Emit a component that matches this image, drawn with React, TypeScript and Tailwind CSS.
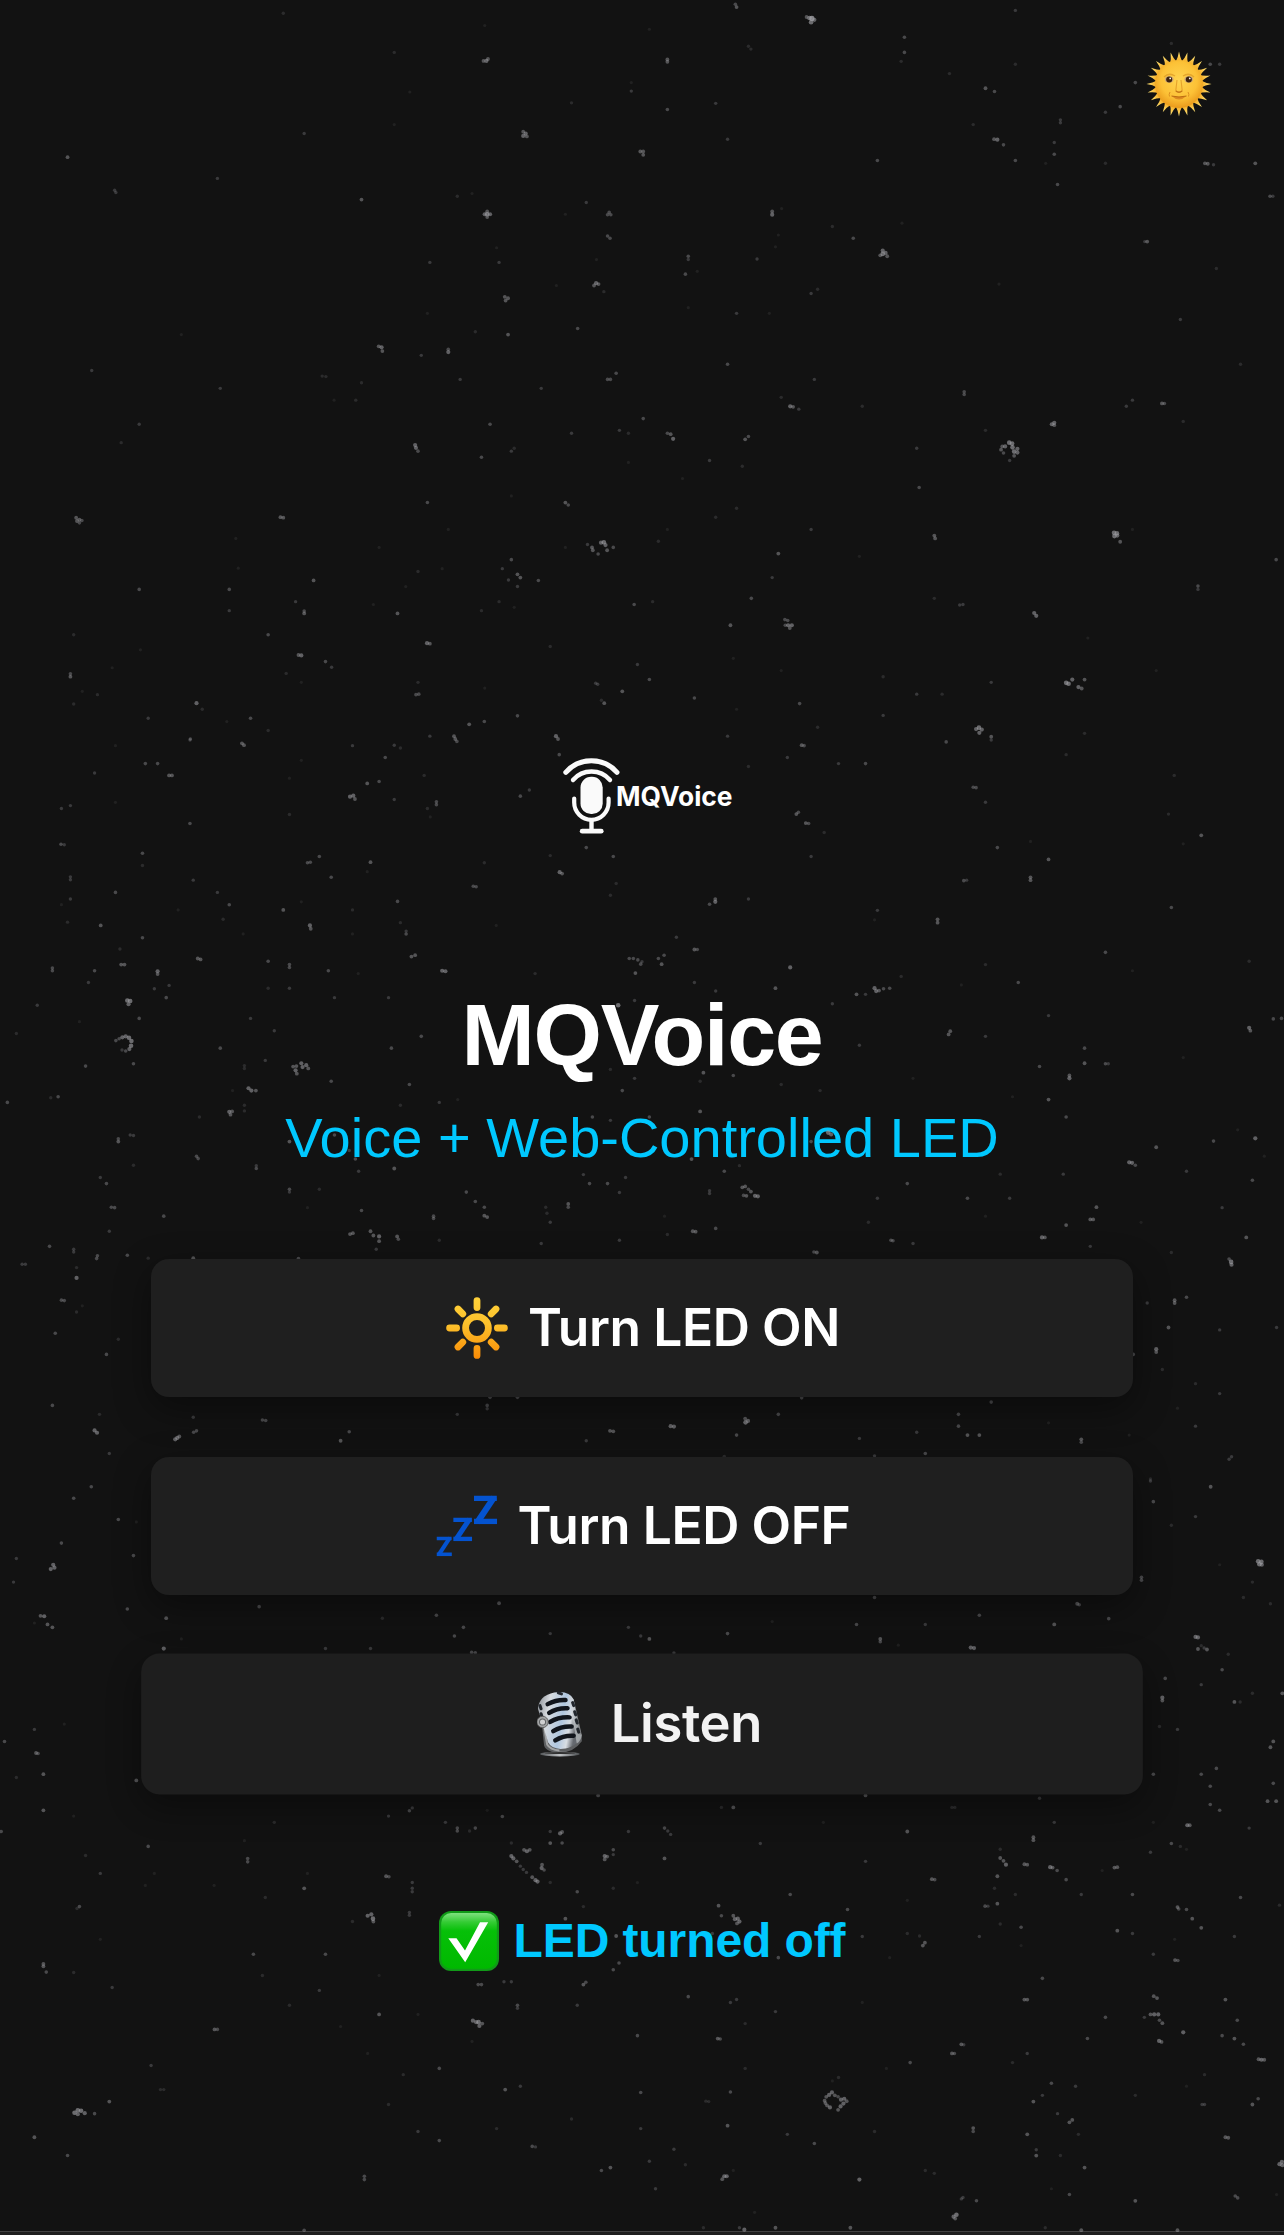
import React from "react";

type Patch = { x: number; y: number; sx: number; sy: number; stars: string };

// Each entry reads "x,y,brightness" in the patch's own units.
const patches: Patch[] = [
  {
    x: 0, y: 0, sx: 0.4094, sy: 0.4719,
    stars:
      "692,28,2 1184,54,1 963,111,2 1181,129,5 1188,129,6 1192,125,5 1542,175,1 1542,193,3 1396,218,2 1001,195,1 963,264,1 743,283,3 165,333,5 280,403,3 283,408,3 531,378,3 883,423,5 1278,279,5 1278,288,6 1284,283,6 1287,289,5 1564,321,5 1117,416,2 1153,410,1 1432,429,3 1381,454,1 1184,454,6 1190,448,5 1190,454,7 1190,460,5 1197,454,6 1488,450,4 1484,455,4 1492,455,4 1484,500,4 1490,505,4 1213,525,1 1219,556,3 1050,556,3 1457,550,1 1451,605,5 1456,600,6 1462,602,5 1475,618,2 1359,605,1 1233,629,5 1235,637,5 1241,632,5 1044,664,1 1411,696,4 1161,703,2 1241,709,5 443,709,1 925,734,5 932,736,6 934,744,5 1029,753,3 1095,740,4 1095,746,6 224,785,3 787,797,2 796,798,2 883,811,2 1124,804,3 1484,804,4 1491,804,4 1505,791,4 538,823,3 816,848,1 869,848,2 1322,823,3 340,899,3 296,938,2 1197,899,4 1396,918,3 1513,912,3 1535,918,2 1014,943,6 1016,949,6 1021,956,4 1256,950,2 1249,956,3 1176,969,4 1535,980,1 1044,1065,4 1249,1051,1 1381,1065,5 1388,1070,4 186,1097,5 188,1104,5 194,1101,5 200,1103,4 194,1108,4 685,1096,5 692,1097,5 1095,1122,1 1435,1154,3 1446,1160,5 1448,1166,5 1468,1150,6 1475,1149,7 1479,1155,6 1483,1166,5 1461,1174,4 1498,1160,4 1381,1160,1 576,1141,1 582,1204,1 926,1160,1 1249,1186,4 1227,1205,3 1080,1205,1 1021,1211,2 1264,1217,5 1271,1224,5 1242,1229,3 1264,1243,3 1315,1230,4 766,1230,5 991,1243,1 340,1249,4 560,1249,4 560,1294,3 722,1275,3 743,1295,4 743,1300,5 971,1300,5 912,1281,1 1219,1275,2 1256,1287,1 1176,1294,2 1549,1281,4 180,1345,2 655,1345,4 1043,1363,6 1050,1364,5 1344,1370,2 343,1377,1 729,1388,5 736,1389,6 795,1402,4 810,1414,3 699,1427,2 1557,1408,3 172,1428,4 172,1434,5 274,1415,1 736,1446,1 1021,1446,2 1016,1472,4 1023,1471,4 238,1472,2 201,1465,1 180,1492,2 1184,1458,1 1455,1448,3 1460,1450,3 1520,1465,5 1476,1490,5 1469,1484,2 480,1490,6 494,1503,2 362,1522,3 612,1522,4 554,1529,1 1264,1517,4 1183,1529,4 1146,1535,5 655,1548,2 1050,1560,3 1109,1560,5 1112,1566,5 1358,1560,6 1363,1566,5 465,1566,4",
  },
  {
    x: 642, y: 0, sx: 0.4094, sy: 0.4719,
    stars:
      "228,9,4 231,15,5 402,36,5 409,38,7 415,39,8 413,47,7 421,42,6 18,62,1 912,22,3 260,98,2 266,104,2 641,79,4 641,111,4 633,130,2 62,126,5 62,131,5 751,156,2 839,187,5 861,194,4 912,136,2 180,219,3 62,232,4 209,295,3 1293,92,2 1388,136,4 1411,136,3 1205,175,4 1168,226,4 1132,238,3 1022,254,3 1022,260,3 809,264,2 860,295,5 868,296,6 883,307,4 912,340,4 1007,302,3 1007,327,4 986,346,1 1132,346,2 3,321,5 3,328,5 575,340,4 1375,346,5 1382,347,5 1396,349,3 1498,346,5 1015,391,4 1534,416,4 1541,416,3 318,448,5 318,455,6 341,442,1 465,480,2 516,505,4 333,498,1 326,523,1 635,473,1 582,541,5 588,531,6 588,538,7 595,536,6 599,543,5 113,543,4 113,550,3 106,581,4 135,575,1 281,549,3 1228,512,3 1234,512,5 1403,569,2 413,622,3 429,613,2 872,602,1 113,652,1 231,664,3 311,664,1 1315,677,3 209,772,4 1462,772,2 421,804,3 340,842,2 362,861,6 369,862,5 383,867,3 538,861,2 787,830,4 787,836,4 1198,848,3 1183,861,3 1270,855,5 1276,855,4 3,887,4 62,918,4 70,920,5 76,930,6 260,925,4 252,931,5 1322,893,2 839,912,2 1001,899,6 1007,896,6 1007,901,5 877,953,5 880,946,5 887,946,6 897,938,7 904,940,7 905,948,7 909,957,7 917,951,6 917,959,6 909,966,5 898,976,3 883,960,4 165,976,3 671,950,3 245,988,2 99,1014,1 231,1077,2 180,1096,2 677,1033,4 62,1122,1 413,1122,3 40,1147,2 714,1135,5 716,1141,5 1153,1129,7 1160,1130,7 1154,1136,7 1161,1135,6 1168,1148,5 1198,1122,1 333,1173,5 531,1179,1 318,1224,3 1549,1186,4 267,1268,4 26,1275,2 714,1268,2 776,1282,3 784,1281,3 1358,1242,4 1358,1249,3 216,1325,5 349,1313,4 356,1315,4 350,1325,4 357,1325,6 366,1325,6 361,1331,5 958,1299,6 963,1305,6 1089,1352,1 223,1395,1 340,1421,1 18,1440,4 589,1434,2 671,1471,3 733,1471,2 853,1446,3 128,1479,4 231,1503,1 385,1491,4 429,1541,2 1036,1447,7 1042,1449,7 1051,1440,6 1066,1456,6 1074,1459,5 1081,1440,5 816,1545,6 823,1542,7 830,1546,6 824,1553,6 853,1561,5 589,1516,3 209,1560,3 1081,1554,2 1256,1421,1",
  },
  {
    x: 0, y: 740, sx: 0.4094, sy: 0.4719,
    stars:
      "591,7,5 596,11,5 464,0,3 861,12,3 963,11,3 978,17,2 941,37,4 1116,3,4 355,50,4 385,50,4 231,70,3 282,12,1 413,75,5 420,75,5 736,43,1 707,81,1 1036,75,2 897,92,5 926,88,4 855,120,6 863,118,6 867,125,5 963,126,3 1066,131,4 1066,137,4 1044,145,2 1051,163,1 150,145,3 172,139,3 282,132,1 707,158,2 464,177,4 149,221,4 157,222,3 348,240,4 348,266,2 1293,106,3 1271,119,4 1366,31,4 751,260,4 758,259,4 780,247,4 905,259,5 897,279,1 809,291,4 1183,260,2 1344,245,2 1432,228,4 1498,247,4 1367,280,6 1373,283,5 1156,310,4 1163,311,4 172,290,3 172,296,3 472,297,3 282,323,4 172,337,3 150,349,1 531,323,3 560,349,4 736,343,1 692,360,5 861,360,2 435,360,1 545,380,2 165,386,2 246,393,5 757,393,6 759,400,5 971,342,4 978,387,2 992,405,3 992,411,4 348,419,4 861,411,1 594,411,1 1212,393,1 1491,329,2 1505,304,2 128,483,4 128,489,4 231,489,4 216,514,3 296,476,5 304,476,5 293,443,2 483,463,5 490,465,5 385,490,6 385,496,5 377,527,3 413,520,3 406,546,4 655,469,4 707,476,4 707,482,4 655,526,2 707,526,3 802,489,4 875,495,1 817,546,3 949,546,3 1005,459,5 1014,456,5 1080,489,6 1088,490,6 1307,495,2 1537,463,4 1547,463,4 1558,466,4 1565,475,4 1552,494,5 91,562,3 311,552,7 318,553,7 314,560,6 340,590,4 40,622,2 194,597,1 612,590,3 670,616,3 283,637,4 291,633,4 299,630,6 307,628,6 315,631,7 321,638,7 320,648,7 316,655,6 307,659,4 298,657,3 326,686,4 209,691,4 538,653,4 648,679,3 597,690,2 597,696,2 1029,628,4 956,653,4 809,723,4 1000,730,4 716,692,5 724,691,5 722,700,6 725,707,5 736,685,6 739,693,6 748,689,6 753,696,5 607,738,6 614,743,6 625,743,5 568,743,1 18,768,4 142,756,4 124,758,2 560,788,6 567,787,5 563,794,5 487,799,2 597,774,2 597,786,2 978,774,2 1073,768,3 1118,762,1 289,845,4 289,851,5 318,837,3 326,838,3 480,882,4 484,887,4 626,902,3 626,908,4 326,901,2 707,851,5 817,837,4 853,870,3 868,888,4 963,908,5 876,914,3 245,927,3 260,940,4 272,990,4 280,991,4 400,1009,4 267,1041,3 121,1073,4 707,952,4 707,958,3 780,952,2 751,991,1 883,997,4 855,1047,5 862,1045,5 905,1041,5 912,1050,5 926,1052,6 926,1062,5 919,1079,3 970,1052,5 973,1058,4 1139,958,4 1161,978,4 1183,990,4 1183,1008,5 1190,1011,5 1059,1009,4 1059,1014,4 1073,1060,2 1336,1003,2 1344,1022,3 1333,990,2 1388,983,5 1388,990,4 1425,921,3 1440,940,4 1484,940,4 1528,927,3 1513,959,3 1513,1060,3 1322,1067,3 1447,799,4 1491,806,3 1520,743,4 1550,717,3 1491,698,2 1550,552,3 1510,562,7 180,1079,3 180,1085,3 238,1093,4 236,1099,4 311,1092,4 54,1111,3 62,1111,3 187,1118,2 187,1140,6 150,1187,4 157,1188,4 201,1199,1 187,1212,2 135,1257,4 289,1270,2 260,1302,4 128,1410,4 243,1429,2 362,1098,2 472,1098,5 729,1099,4 231,1463,6 237,1468,6 267,1512,3 472,1435,3 428,1482,6 433,1479,6 438,1476,5 473,1467,4 480,1464,4 641,1441,4 649,1442,4 832,1485,5 853,1466,4 1117,1429,3 1190,1410,4 1190,1417,3 1197,1393,4 1264,1393,4 1490,1464,5 1498,1465,5 1432,1485,3",
  },
  {
    x: 642, y: 740, sx: 0.4094, sy: 0.4719,
    stars:
      "390,11,5 396,12,4 743,4,4 853,0,3 355,37,3 260,56,2 480,50,3 546,50,4 1036,31,2 1300,75,2 1286,157,2 809,100,4 816,101,4 839,132,3 377,157,5 382,153,4 400,176,5 407,177,4 445,196,2 413,247,3 868,228,4 949,215,1 993,253,5 1366,202,5 1322,220,1 786,298,4 793,297,3 949,291,5 949,297,5 179,337,5 179,343,6 165,348,4 260,337,3 575,361,3 568,381,1 722,380,5 722,387,5 1293,355,4 1132,450,4 1483,469,2 84,418,3 128,444,5 135,444,4 40,463,4 54,456,4 48,475,5 0,470,3 362,482,6 128,514,3 180,532,3 326,526,5 524,539,5 546,539,3 568,526,6 572,532,6 579,531,5 590,527,4 605,526,4 633,501,2 465,559,3 839,476,2 780,519,1 919,514,4 1198,489,1 993,584,3 753,617,5 749,624,5 839,628,3 531,647,3 1081,653,4 1081,685,5 1132,686,4 1139,686,3 971,692,4 1322,673,1 1483,610,6 1486,616,5 1542,591,4 1562,590,4 1044,711,5 1044,717,6 993,762,5 905,756,1 1036,799,4 662,717,1 340,730,2 435,743,2 150,705,5 223,711,4 142,723,2 142,787,5 18,799,4 455,832,7 462,836,6 413,851,4 121,888,5 201,914,4 238,902,2 648,940,4 1256,863,5 1396,850,4 1498,844,6 1455,826,1 1190,895,6 1197,896,6 1205,901,4 1520,882,1 1330,914,3 1491,933,4 1029,920,3 875,920,2 245,948,5 252,946,5 248,965,4 255,966,5 260,952,4 266,957,5 276,966,6 283,967,6 165,955,3 165,961,3 575,971,3 795,971,4 898,971,3 1110,990,5 1417,991,3 1095,1016,5 1102,1016,5 1036,1028,5 839,1009,1 553,1022,2 55,1009,1 62,1048,2 124,1041,5 131,1042,5 180,1035,4 608,1060,4 613,1061,4 662,1067,3 977,1054,6 984,1054,5 1095,1073,3 1219,1022,1 1476,1054,5 1293,1086,2 420,1085,4 427,1086,5 1434,1100,4 1439,1106,7 1440,1112,6 1234,1193,3 1301,1187,5 1301,1193,5 1330,1181,4 1286,1245,5 1411,1250,3 1550,1245,3 1256,1291,6 1256,1297,5 1271,1334,2 1352,1364,2 1411,1385,3 1352,1454,3 1308,1416,1 1200,1302,4 390,1394,4 853,1403,4 773,1429,4 773,1454,4 795,1473,5 824,1473,5 671,1467,3 531,1480,3 692,1512,4 568,1517,3 333,1429,4 252,1438,5 253,1446,7 259,1443,6 231,1473,4 70,1454,6 78,1455,6 201,1518,2 993,1447,1 1073,1482,5 1073,1488,4 1190,1473,1 1434,1524,3 1440,1519,3 1242,1566,2",
  },
  {
    x: 0, y: 1480, sx: 0.4094, sy: 0.4815,
    stars:
      "223,14,4 180,38,4 289,82,4 150,131,4 40,163,3 33,212,3 326,157,4 333,87,1 130,176,6 124,185,6 133,182,6 99,282,5 108,283,6 116,300,5 128,306,5 84,297,1 311,268,4 406,287,5 443,330,1 400,350,6 633,263,4 934,287,2 1066,281,4 1132,306,4 1110,324,4 1219,256,5 1344,319,3 795,350,3 905,350,3 1152,358,4 1161,359,4 1535,306,3 1565,324,3 84,518,3 11,543,4 88,567,5 93,568,4 40,618,2 106,611,5 157,507,1 333,624,5 106,686,5 3,730,4 180,698,1 209,780,2 245,817,3 362,761,4 377,817,1 355,842,1 670,711,2 949,698,3 1000,687,4 1007,681,3 1088,711,3 1117,723,4 1117,729,4 1147,729,2 1161,723,4 1190,686,1 1227,699,4 1461,655,5 605,786,4 605,793,4 597,749,1 743,848,5 751,817,1 648,867,2 523,842,1 943,823,5 950,824,4 1007,836,3 1007,848,3 1007,855,3 1249,754,2 1344,730,3 1344,754,5 1373,754,4 1368,734,6 1373,731,5 1280,768,5 1287,771,6 1294,768,5 1249,781,6 1254,786,6 1262,792,5 1271,802,3 1278,809,3 1286,815,3 1300,825,5 1308,831,6 1313,834,6 1324,799,5 1323,806,6 1329,810,4 1344,836,2 1477,781,6 1477,788,5 1483,782,5 1498,768,4 1498,778,3 1535,730,3 1410,855,4 1498,848,2 1557,836,1 1425,886,2 194,886,4 188,890,2 898,905,6 907,902,6 911,911,7 912,917,5 861,917,2 1000,898,3 1000,904,3 1381,911,5 106,1005,5 106,1010,5 113,1022,4 180,1023,2 274,1054,3 245,954,1 619,985,4 795,985,4 641,1029,2 780,1060,3 926,1029,1 707,1091,2 926,1110,5 1021,1110,1 832,1135,1 524,1141,5 531,1141,4 1168,1048,4 1176,1048,4 1231,1042,3 1249,1042,3 1425,1048,5 1431,1043,4 1498,1017,4 1512,1003,4 1505,947,5 1264,1091,4 1264,1097,3 1410,1091,3 1155,1123,6 1163,1126,6 1169,1126,7 1171,1134,6 1178,1129,5 1153,1166,1 1557,1154,4 898,1191,1 985,1235,2 1073,1222,4 1234,1266,5 1271,1259,3 1565,1272,4 369,1216,3 392,1266,2 400,1266,2 949,1297,2 1396,1327,2 1213,1347,2 1021,1353,3 1073,1372,4 1300,1384,4 1308,1385,3 1565,1347,3 182,1314,7 190,1309,7 198,1310,7 207,1315,6 190,1317,6 231,1316,4 267,1291,5 84,1365,5 165,1403,4 890,1446,4 890,1453,4 1469,1434,4 1491,1428,5 743,1558,4",
  },
  {
    x: 642, y: 1480, sx: 0.4094, sy: 0.4815,
    stars:
      "1242,2,3 1389,14,5 1249,45,4 1352,76,3 1293,94,2 1505,169,7 1513,170,7 1508,175,7 1514,176,6 1411,176,1 1220,202,4 1220,208,4 1491,212,2 1469,244,2 1535,257,2 1063,257,5 1068,259,4 1140,288,4 1007,300,5 824,281,4 568,244,4 524,300,4 692,300,3 582,330,5 582,336,4 626,343,1 803,348,6 811,349,6 209,319,4 18,330,5 318,294,1 78,359,3 1352,326,6 1358,327,6 1358,351,5 1366,344,2 1373,349,3 1380,352,5 1432,362,2 1417,394,4 1278,412,4 1366,425,3 1491,443,2 1271,452,6 1271,458,5 1447,461,5 1461,461,2 1564,443,5 1264,512,2 1308,518,3 1542,543,5 1535,555,5 1403,599,4 1366,611,4 1249,611,4 1388,636,4 1388,674,4 1411,686,4 1542,630,4 1528,667,5 1549,667,5 1332,717,6 1338,717,5 1483,723,3 1249,711,1 1293,755,4 1315,761,2 1330,767,1 1242,773,3 194,680,2 223,680,5 546,655,5 757,680,2 764,680,2 971,661,3 1007,711,3 55,723,4 63,729,3 70,736,3 443,711,1 289,755,3 648,730,5 55,786,5 546,792,3 956,742,5 956,748,5 875,767,2 875,785,5 883,791,5 889,799,6 934,798,5 941,799,5 997,804,6 1003,805,5 1014,811,4 1124,811,1 1154,805,5 1161,804,5 1036,830,4 868,823,5 861,848,2 868,880,5 912,861,2 1073,861,3 1198,861,4 838,885,4 845,885,3 708,829,5 715,830,4 648,873,1 362,861,4 187,884,5 194,905,4 223,905,5 227,912,6 234,911,6 238,917,6 232,921,5 502,892,4 1462,867,4 1557,883,2 1308,887,5 1311,891,4 1330,892,4 1344,911,5 1366,930,5 1447,948,3 1301,954,1 1161,936,5 1198,942,3 875,922,2 926,929,4 926,967,1 824,948,3 538,948,3 648,942,2 678,947,2 691,961,5 686,967,5 172,942,3 333,992,4 605,992,1 1249,985,3 1302,997,5 1309,998,4 978,1035,4 934,1079,5 941,1079,5 113,1073,4 216,1085,3 231,1079,3 538,1085,1 326,1104,3 252,1129,2 185,1160,5 191,1161,4 1425,1079,5 1250,1072,5 1258,1076,5 1242,1110,5 1251,1110,6 1261,1110,6 1227,1116,3 1264,1122,4 1271,1128,5 1132,1116,4 1088,1160,4 1263,1165,6 1269,1167,5 1322,1147,6 1454,1122,4 1417,1154,4 1447,1160,5 1469,1172,4 1506,1203,5 1513,1204,6 1520,1204,5 780,1172,5 786,1173,3 757,1191,5 763,1191,4 941,1191,3 905,1210,2 655,1210,4 597,1222,1 252,1222,2 216,1271,4 156,1290,2 163,1291,2 480,1241,2 465,1248,1 446,1289,5 450,1281,5 457,1277,6 464,1272,6 471,1278,5 479,1281,4 486,1287,6 494,1285,6 500,1290,5 492,1295,6 485,1301,6 479,1308,5 459,1303,6 452,1299,5 448,1294,5 1000,1253,4 1059,1259,3 978,1278,3 956,1291,5 1015,1316,3 1044,1334,5 1051,1329,5 1066,1359,2 1205,1278,2 1330,1259,1 1374,1235,2 1368,1297,3 1374,1297,3 1505,1285,4 1491,1297,5 1425,1365,5 1432,1366,5 809,1346,5 809,1353,4 568,1353,2 941,1359,5 963,1391,3 963,1403,5 1022,1403,2 1081,1428,5 209,1341,5 355,1359,3 421,1378,4 78,1390,3 18,1415,3 106,1422,2 33,1472,3 201,1446,6 207,1446,6 196,1452,5 223,1434,1 531,1453,6 692,1434,2 714,1440,2 1000,1472,1 1044,1484,4 780,1493,3 784,1490,3 817,1497,4 1205,1497,5 1449,1487,4 1455,1491,4 1550,1484,1 1557,1421,6 1563,1416,6 1564,1423,6 768,1526,7 761,1530,6 765,1534,5 275,1521,1 150,1553,2 238,1553,3 250,1557,6 326,1553,5 509,1553,5 985,1553,2 1073,1558,5 1308,1558,5",
  },
];

const tones = [0, 0.1, 0.18, 0.28, 0.38, 0.46, 0.54, 0.62, 0.8];
const radii = [0, 1.6, 1.7, 1.7, 1.8, 1.9, 2.1, 2.3, 2.6];

function Starfield() {
  return (
    <svg className="pointer-events-none absolute inset-0 h-full w-full blur-[0.5px]" viewBox="0 0 1284 2235" aria-hidden="true">
      {patches.map((p, i) => (
        <g key={i}>
          {p.stars.split(" ").map((s, j) => {
            const [x, y, b] = s.split(",").map(Number);
            return (
              <circle
                key={j}
                cx={p.x + x * p.sx}
                cy={p.y + y * p.sy}
                r={radii[b]}
                fill="#a3a3a8"
                fillOpacity={tones[b]}
              />
            );
          })}
        </g>
      ))}
    </svg>
  );
}

function SunFace() {
  const rays = Array.from({ length: 24 }, (_, i) => i * 15);
  return (
    <svg className="h-[66px] w-[66px]" viewBox="-33 -33 66 66" aria-label="Light mode">
      <defs>
        <radialGradient id="face" cx="0.5" cy="0.42" r="0.58">
          <stop offset="0" stopColor="#ffd450" />
          <stop offset="0.65" stopColor="#fcc136" />
          <stop offset="1" stopColor="#ea9a1c" />
        </radialGradient>
        <linearGradient id="ray" x1="0" y1="-32" x2="0" y2="-22" gradientUnits="userSpaceOnUse">
          <stop offset="0" stopColor="#ffe477" />
          <stop offset="1" stopColor="#f4a91f" />
        </linearGradient>
      </defs>
      {rays.map((a) => (
        <path key={a} d="M-3.4 -22 Q-1 -26 0 -32.5 Q1.2 -26 3.4 -22Z" fill="url(#ray)" transform={`rotate(${a})`} />
      ))}
      <circle r="24" fill="url(#face)" />
      <path d="M-15 -7 Q-10 -12 -4 -8 M4 -8 Q10 -12 15 -7" fill="none" stroke="#dd9a25" strokeWidth="1.3" opacity="0.75" />
      <ellipse cx="-9.8" cy="-4.6" rx="4.3" ry="3.1" fill="#c9a57a" />
      <ellipse cx="9.8" cy="-4.6" rx="4.3" ry="3.1" fill="#c9a57a" />
      <circle cx="-9.8" cy="-4.6" r="3" fill="#3c2210" />
      <circle cx="9.8" cy="-4.6" r="3" fill="#3c2210" />
      <circle cx="-8.8" cy="-5.6" r="0.9" fill="#fff" />
      <circle cx="10.8" cy="-5.6" r="0.9" fill="#fff" />
      <path d="M-2 -4 L-3.2 6.5 Q0 10 3.2 6.5 L2 -4" fill="none" stroke="#dc9020" strokeWidth="1.1" opacity="0.7" />
      <path d="M-3.2 7 Q0 9.5 3.2 7" fill="none" stroke="#c47716" strokeWidth="1.3" />
      <path d="M-7.5 12 Q0 13.6 7.5 12 Q0 19 -7.5 12Z" fill="#dc8a22" />
      <path d="M-7.5 12 Q0 14 7.5 12" fill="none" stroke="#b5660f" strokeWidth="0.9" />
      <path d="M-9 8 Q-10.5 10.5 -9.5 12.5 M9 8 Q10.5 10.5 9.5 12.5" fill="none" stroke="#dc9020" strokeWidth="1" />
    </svg>
  );
}

function Logo() {
  return (
    <svg className="h-[80px] w-[180px]" viewBox="0 0 180 80" aria-label="MQVoice">
      <g fill="none" stroke="#fafafa" strokeLinecap="round">
        <path d="M4.8 17.3 A34 34 0 0 1 56 17.3" strokeWidth="5" />
        <path d="M12 25 A24.5 24.5 0 0 1 49 25" strokeWidth="4.4" />
        <path d="M13.2 43.5 V47.6 A17.2 17.2 0 0 0 47.6 47.6 V43.5" strokeWidth="4.2" />
        <path d="M30.5 65 V75" strokeWidth="4.4" strokeLinecap="butt" />
        <path d="M21.2 76.2 H40.2" strokeWidth="4.8" />
      </g>
      <rect x="19.5" y="21.8" width="22.2" height="37.2" rx="10.6" fill="#fafafa" />
      <text x="55" y="51.4" fill="#fff" fontFamily="Inter, sans-serif" fontWeight="700" fontSize="27" textLength="116.5" lengthAdjust="spacingAndGlyphs">
        MQVoice
      </text>
    </svg>
  );
}

function BrightIcon() {
  return (
    <svg className="h-[62px] w-[62px] shrink-0" viewBox="-31 -31 62 62" aria-hidden="true">
      <defs>
        <linearGradient id="bright" x1="0" y1="-31" x2="0" y2="31" gradientUnits="userSpaceOnUse">
          <stop offset="0" stopColor="#ffd23a" />
          <stop offset="0.45" stopColor="#fcc02b" />
          <stop offset="1" stopColor="#f98a05" />
        </linearGradient>
      </defs>
      <circle r="11.4" fill="none" stroke="url(#bright)" strokeWidth="6.8" />
      <path
        d="M-3.4 -27.4a3.4 3.4 0 0 1 6.8 0v7a3.4 3.4 0 0 1-6.8 0zM-3.4 20.4a3.4 3.4 0 0 1 6.8 0v7a3.4 3.4 0 0 1-6.8 0zM-27.4 -3.4h7a3.4 3.4 0 0 1 0 6.8h-7a3.4 3.4 0 0 1 0-6.8zM20.4 -3.4h7a3.4 3.4 0 0 1 0 6.8h-7a3.4 3.4 0 0 1 0-6.8z"
        fill="url(#bright)"
      />
      <path
        d="M-19 -19L-14.2 -14.2M19 -19L14.2 -14.2M-19 19L-14.2 14.2M19 19L14.2 14.2"
        fill="none"
        stroke="url(#bright)"
        strokeWidth="6.8"
        strokeLinecap="round"
      />
    </svg>
  );
}

function Zed({ x, y, width, height }: { x: number; y: number; width: number; height: number }) {
  return (
    <svg x={x} y={y} width={width} height={height} viewBox="0 0 23 29" preserveAspectRatio="none" overflow="hidden">
      <path d="M0 2.7H22.6M0 26.3H23" stroke="#0453d0" strokeWidth="5.4" />
      <path d="M20 1.5L3 27.5" stroke="#0453d0" strokeWidth="6.2" />
    </svg>
  );
}

function SleepIcon() {
  return (
    <svg className="h-[62px] w-[62px] shrink-0" viewBox="0 0 62 62" aria-hidden="true">
      <Zed x={38} y={0.6} width={23.2} height={28.6} />
      <Zed x={17.2} y={22.6} width={19} height={23.6} />
      <Zed x={0.5} y={41.6} width={15.4} height={19.6} />
    </svg>
  );
}

function StudioMic() {
  return (
    <svg className="ml-[15px] h-[65px] w-[46px] shrink-0" viewBox="0 0 46 65" aria-hidden="true">
      <defs>
        <linearGradient id="chrome" x1="0" y1="0" x2="1" y2="0.25">
          <stop offset="0" stopColor="#8d9299" />
          <stop offset="0.3" stopColor="#e3e7ec" />
          <stop offset="0.65" stopColor="#b8d0ea" />
          <stop offset="0.85" stopColor="#e4e9ef" />
          <stop offset="1" stopColor="#6a6e74" />
        </linearGradient>
        <linearGradient id="stand" x1="0" y1="0" x2="1" y2="0">
          <stop offset="0" stopColor="#55585b" />
          <stop offset="0.5" stopColor="#c9cccf" />
          <stop offset="1" stopColor="#4c4f52" />
        </linearGradient>
      </defs>
      <path d="M5 34 L7 53 Q9 60 23 60 Q36 60 44 49 L44 42 L36 44 L10 46Z" fill="#626466" />
      <path d="M7 35 L10 52 Q13 57 22 58" fill="none" stroke="#a9abac" strokeWidth="2" />
      <path d="M1 17 Q2 4 17 1 Q32 -1 36 8 L42 43 Q41 53 28 56 Q15 58 11 50 L6 34Z" fill="url(#chrome)" />
      <path d="M31 4 Q36 6 37 12 L44 43 Q43 49 39 51 L34 20Z" fill="#d4d8dc" opacity="0.6" />
      <path
        d="M10.5 12.5 Q19 8 28 8.5M12 21 Q20 16 30 16.5M13 30 Q21 25 32 25.5M16 39 Q24 34 34 34.5M18 48 Q26 43 36 43.5"
        fill="none"
        stroke="#11161d"
        strokeWidth="4.4"
        strokeLinecap="round"
      />
      <path d="M3 14l1 3M4 22l1 3M35 11l1 3M37 20l1 3M38.5 28l1 3M40 37l1 3M21 1.5l3 1" stroke="#23282e" strokeWidth="3" strokeLinecap="round" />
      <circle cx="5.5" cy="30" r="5.6" fill="#a9abac" stroke="#555" strokeWidth="0.8" />
      <circle cx="5.5" cy="30" r="3" fill="#d9dadb" stroke="#66686a" strokeWidth="1" />
      <ellipse cx="22.5" cy="61.5" rx="19.5" ry="2.4" fill="url(#stand)" />
      <ellipse cx="22.5" cy="60.4" rx="15" ry="1" fill="#333" />
    </svg>
  );
}

function CheckIcon() {
  return (
    <svg className="h-[60px] w-[60px] shrink-0" viewBox="0 0 60 60" aria-hidden="true">
      <defs>
        <linearGradient id="green" x1="0" y1="0" x2="0" y2="1">
          <stop offset="0" stopColor="#7fe07f" />
          <stop offset="0.16" stopColor="#35cc35" />
          <stop offset="0.32" stopColor="#06c008" />
          <stop offset="1" stopColor="#00b900" />
        </linearGradient>
      </defs>
      <rect width="60" height="60" rx="12" fill="#119a18" />
      <rect x="2.2" y="2" width="55.6" height="55.8" rx="10" fill="url(#green)" />
      <path d="M9.3 27.3H17.5L26 39.5L41 11.3H49.2L26.2 51.2Z" fill="#fff" />
    </svg>
  );
}

function ActionButton({ icon, label, className = "" }: { icon: React.ReactNode; label: React.ReactNode; className?: string }) {
  return (
    <button
      type="button"
      className={`flex h-[138px] w-[982px] items-center justify-center rounded-[18px] bg-[#1f1f1f] font-['Inter',sans-serif] text-[51.5px] leading-none font-semibold tracking-[-0.4px] text-white shadow-[0_12px_36px_rgba(0,0,0,0.4)] ${className}`}
    >
      {icon}
      {label}
    </button>
  );
}

export default function App() {
  return (
    <div className="relative flex h-[2235px] w-[1284px] flex-col overflow-hidden bg-[#121212] font-['Liberation_Sans',Arial,sans-serif]">
      <header className="flex justify-end pt-[51px] pr-[72px]">
        <SunFace />
      </header>
      <main className="flex flex-col items-center pt-[638px]">
        <div className="pl-[18px]">
          <Logo />
        </div>
        <h1 className="mt-[148px] text-[88px] leading-[104px] font-bold tracking-[-1.3px] whitespace-nowrap text-white">MQVoice</h1>
        <p className="mt-[17px] text-[56px] leading-[68px] whitespace-nowrap text-[#00c8ff]">Voice + Web-Controlled LED</p>
        <div className="relative z-10 mt-[87px] flex flex-col gap-[60px]">
          <ActionButton className="pl-[2px]" icon={<BrightIcon />} label={<span className="ml-[20px]">Turn LED ON</span>} />
          <ActionButton className="pl-[2px]" icon={<SleepIcon />} label={<span className="ml-[20px]">Turn LED OFF</span>} />
          <ActionButton className="scale-[1.02] opacity-95" icon={<StudioMic />} label={<span className="ml-[26px]">Listen</span>} />
        </div>
        <p className="mt-[118px] flex items-center text-[48px] leading-[60px] font-bold whitespace-nowrap text-[#00c8ff]">
          <CheckIcon />
          <span className="ml-[15px] tracking-[-0.1px]">LED turned off</span>
        </p>
      </main>
      <footer className="mt-auto h-[4px] border-t border-[#414141] bg-[#1e1e1e]" />
      <Starfield />
    </div>
  );
}
